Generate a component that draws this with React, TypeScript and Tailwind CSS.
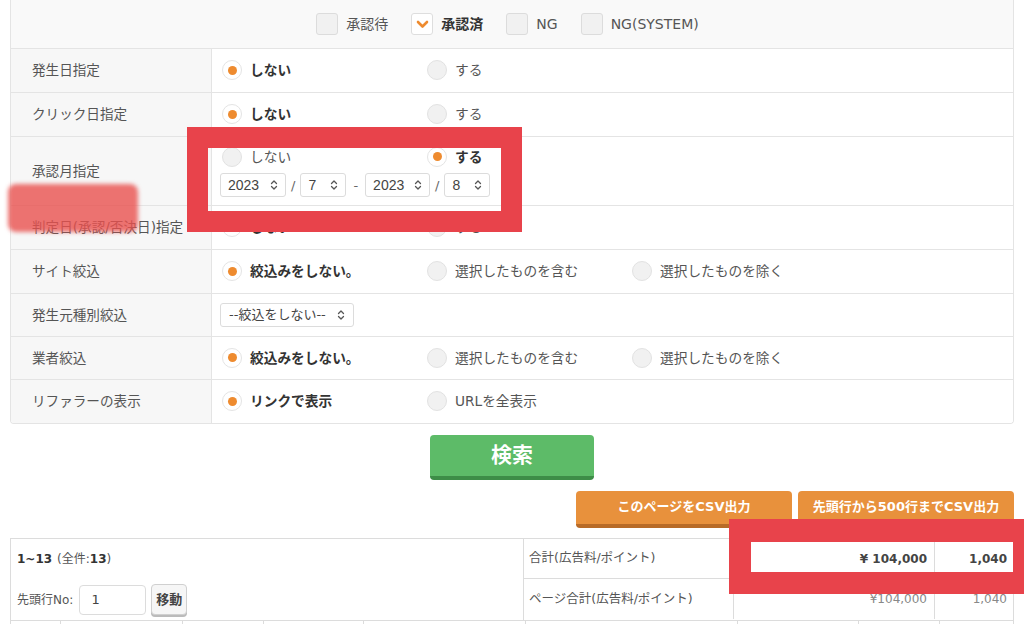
import { ChevronsUpDown } from "lucide-react";

const ORANGE = "bg-[#ee8b2f]";

function CheckBox({ checked, label }: { checked?: boolean; label: string }) {
	return (
		<div className="mr-[23px] flex items-center">
			<div
				className={`flex size-[22px] items-center justify-center rounded-[3px] border ${
					checked ? "border-[#dedede] bg-white" : "border-[#dcdcdc] bg-[#f1f1f1]"
				}`}
			>
				{checked && (
					<svg width="13" height="10" viewBox="0 0 13 10">
						<polyline
							points="2,3 6.5,7.5 11,3"
							fill="none"
							stroke="#ee8b2f"
							strokeWidth="2.6"
							strokeLinecap="round"
							strokeLinejoin="round"
						/>
					</svg>
				)}
			</div>
			<span className={`ml-[8px] text-[14px] ${checked ? "font-bold text-[#333]" : "text-[#555]"}`}>{label}</span>
		</div>
	);
}

function Radio({ checked, label }: { checked?: boolean; label: string }) {
	return (
		<div className="flex w-[205px] items-center">
			<div
				className={`flex size-[20px] items-center justify-center rounded-full border ${
					checked ? "border-[#e4e4e4] bg-white" : "border-[#e2e2e2] bg-[#f1f1f1]"
				}`}
			>
				{checked && <div className={`size-[9px] rounded-full ${ORANGE}`} />}
			</div>
			<span className={`ml-[8px] text-[13.7px] ${checked ? "font-bold text-[#333]" : "text-[#555]"}`}>{label}</span>
		</div>
	);
}

function Select({ value, width }: { value: string; width: string }) {
	return (
		<div
			className={`flex h-[24px] ${width} items-center justify-between rounded-[3px] border border-[#dcdcdc] bg-white pl-[7px] pr-[5px] font-['Liberation_Sans',sans-serif] text-[14px] text-[#444]`}
		>
			<span>{value}</span>
			<ChevronsUpDown className="size-[12px] text-[#555]" strokeWidth={2.6} />
		</div>
	);
}

function Row({ label, height, children }: { label: string; height: string; children: React.ReactNode }) {
	return (
		<div className={`flex ${height} border-b border-[#e4e4e4]`}>
			<div className="flex w-[201px] shrink-0 items-center border-r border-[#e4e4e4] bg-[#f7f7f7] pl-[21px] text-[13.6px] text-[#555]">
				{label}
			</div>
			<div className="flex flex-1 items-center bg-white pl-[10px]">{children}</div>
		</div>
	);
}

export default function App() {
	return (
		<div className="relative h-[624px] w-[1024px] overflow-hidden bg-white font-['DejaVu_Sans','Noto_Sans_CJK_JP',sans-serif] text-[#555]">
			<div className="ml-[10px] w-[1004px] overflow-hidden rounded-b-[4px] border-x border-b border-[#e4e4e4]">
				<div className="flex h-[49px] items-center justify-center border-b border-[#e4e4e4] bg-[#f9f9f9] pl-[14px]">
					<CheckBox label="承認待" />
					<CheckBox checked label="承認済" />
					<CheckBox label="NG" />
					<CheckBox label="NG(SYSTEM)" />
				</div>
				<Row label="発生日指定" height="h-[44px]">
					<Radio checked label="しない" />
					<Radio label="する" />
				</Row>
				<Row label="クリック日指定" height="h-[44px]">
					<Radio checked label="しない" />
					<Radio label="する" />
				</Row>
				<Row label="承認月指定" height="h-[69px]">
					<div className="flex flex-col gap-[6px] pt-[2px]">
						<div className="flex">
							<Radio label="しない" />
							<Radio checked label="する" />
						</div>
						<div className="-ml-[2px] flex items-center gap-[5px] text-[13px] text-[#666]">
							<Select value="2023" width="w-[66px]" />
							<span>/</span>
							<Select value="7" width="w-[46px]" />
							<span className="px-[2px]">-</span>
							<Select value="2023" width="w-[65px]" />
							<span>/</span>
							<Select value="8" width="w-[46px]" />
						</div>
					</div>
				</Row>
				<Row label="判定日(承認/否決日)指定" height="h-[44px]">
					<Radio checked label="しない" />
					<Radio label="する" />
				</Row>
				<Row label="サイト絞込" height="h-[44px]">
					<Radio checked label="絞込みをしない。" />
					<Radio label="選択したものを含む" />
					<Radio label="選択したものを除く" />
				</Row>
				<Row label="発生元種別絞込" height="h-[43px]">
					<div className="-ml-[2px] flex h-[24px] w-[134px] items-center justify-between rounded-[3px] border border-[#dcdcdc] bg-white pl-[8px] pr-[6px] text-[13px] text-[#444]">
						<span>--絞込をしない--</span>
						<ChevronsUpDown className="size-[12px] text-[#555]" strokeWidth={2.6} />
					</div>
				</Row>
				<Row label="業者絞込" height="h-[43px]">
					<Radio checked label="絞込みをしない。" />
					<Radio label="選択したものを含む" />
					<Radio label="選択したものを除く" />
				</Row>
				<div className="flex h-[43px]">
					<div className="flex w-[201px] shrink-0 items-center border-r border-[#e4e4e4] bg-[#f7f7f7] pl-[21px] text-[13.6px] text-[#555]">
						リファラーの表示
					</div>
					<div className="flex flex-1 items-center bg-white pl-[10px]">
						<Radio checked label="リンクで表示" />
						<Radio label="URLを全表示" />
					</div>
				</div>
			</div>

			<div className="flex justify-center pt-[11px]">
				<button className="flex h-[45px] w-[164px] items-center justify-center rounded-[4px] border-b-[4px] border-[#3d8d47] bg-[#5dbb68] text-[21px] font-bold text-white">
					検索
				</button>
			</div>

			<div className="flex justify-end gap-[6px] pr-[10px] pt-[11px]">
				<button className="flex h-[37px] w-[216px] items-center justify-center rounded-[4px] border-b-[4px] border-[#b86b27] bg-[#e8913c] pb-[2px] text-[13px] font-bold text-white">
					このページをCSV出力
				</button>
				<button className="flex h-[37px] w-[216px] items-center justify-center rounded-[4px] border-b-[4px] border-[#b86b27] bg-[#e8913c] pb-[2px] text-[13px] font-bold text-white">
					先頭行から500行までCSV出力
				</button>
			</div>

			<div className="ml-[10px] mt-[10px] w-[1004px] border border-[#dcdcdc]">
				<div className="flex border-b border-[#dcdcdc]">
					<div className="flex w-[513px] shrink-0 flex-col border-r border-[#dcdcdc] pl-[6px]">
						<div className="flex h-[40px] items-center text-[12px] text-[#555]">
							<span className="font-bold text-[#333]">1~13</span>
							<span className="ml-[5px]">(全件:</span>
							<span className="font-bold text-[#333]">13</span>
							<span>)</span>
						</div>
						<div className="flex h-[41px] items-center text-[12px] text-[#555]">
							<span>先頭行No:</span>
							<div className="ml-[6px] flex h-[30px] w-[67px] items-center rounded-[4px] border border-[#dcdcdc] pl-[11px] text-[13px] text-[#444]">
								1
							</div>
							<div className="ml-[5px] flex h-[31px] w-[36px] items-center justify-center rounded-[4px] border border-[#d0d0d0] bg-[#f6f6f6] text-[13px] font-bold text-[#444] shadow-[0_2px_0_#bbb]">
								移動
							</div>
						</div>
					</div>
					<div className="flex flex-1 flex-col">
						<div className="flex h-[40px] border-b border-[#dcdcdc] text-[12.5px]">
							<div className="flex w-[210px] items-center border-r border-[#dcdcdc] pl-[5px]">合計(広告料/ポイント)</div>
							<div className="flex w-[201px] items-center justify-end border-r border-[#dcdcdc] pr-[7px] text-[12px] font-bold text-[#444]">
								¥ 104,000
							</div>
							<div className="flex flex-1 items-center justify-end pr-[6px] text-[12px] font-bold text-[#444]">1,040</div>
						</div>
						<div className="flex h-[40px] text-[12.5px]">
							<div className="flex w-[210px] items-center border-r border-[#dcdcdc] pl-[5px]">ページ合計(広告料/ポイント)</div>
							<div className="flex w-[201px] items-center justify-end border-r border-[#dcdcdc] pr-[7px] text-[12px] text-[#888]">
								¥104,000
							</div>
							<div className="flex flex-1 items-center justify-end pr-[6px] text-[12px] text-[#888]">1,040</div>
						</div>
					</div>
				</div>
				<div className="flex h-[30px]">
					<div className="w-[50px] border-r border-[#dcdcdc]" />
					<div className="w-[122px] border-r border-[#dcdcdc] pl-[38px] pt-[3px]">
						<div className="h-[20px] w-[43px] rounded-[3px] border border-[#dcdcdc]" />
					</div>
					<div className="w-[81px] border-r border-[#dcdcdc]" />
					<div className="w-[100px] border-r border-[#dcdcdc] pl-[9px] pt-[3px]">
						<div className="h-[20px] w-[43px] rounded-[3px] border border-[#dcdcdc]" />
					</div>
					<div className="w-[162px] border-r border-[#dcdcdc]" />
					<div className="w-[212px] border-r border-[#dcdcdc]" />
					<div className="w-[121px] border-r border-[#dcdcdc] pl-[28px] pt-[3px]">
						<div className="h-[20px] w-[65px] rounded-[3px] border border-[#dcdcdc]" />
					</div>
					<div className="w-[81px] border-r border-[#dcdcdc]" />
					<div className="flex-1" />
				</div>
			</div>

			{/* annotation overlays */}
			<div className="absolute left-[8px] top-[184px] h-[48px] w-[130px] rounded-[8px] bg-[#e8504e]/80 blur-[2px]" />
			<div className="absolute left-[187px] top-[127px] h-[105px] w-[335px] border-[21px] border-[#e8434b]" />
			<div className="absolute left-[729px] top-[519px] h-[75px] w-[295px] border-b-[22px] border-l-[22px] border-r-[11px] border-t-[23px] border-[#e8434b]" />
		</div>
	);
}
